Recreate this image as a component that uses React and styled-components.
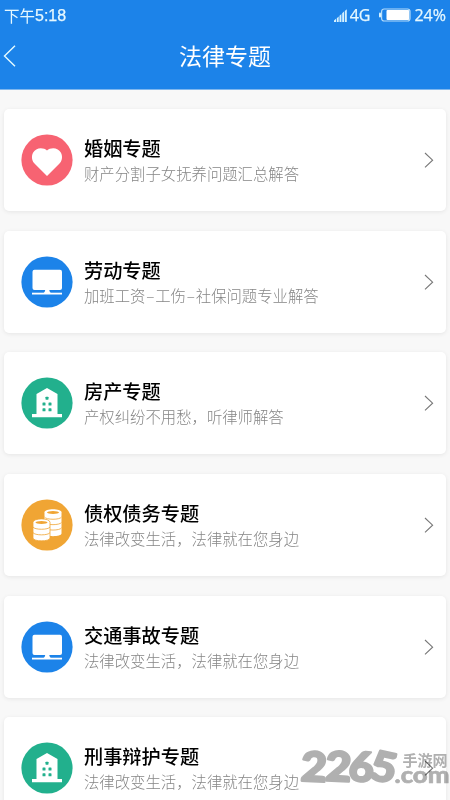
import React from 'react';
import styled, { createGlobalStyle } from 'styled-components';

const GlobalStyle = createGlobalStyle`
  body {
    margin: 0;
    background: #f8f8f8;
    font-family: "Noto Sans CJK SC", "Liberation Sans", sans-serif;
    overflow: hidden;
  }
`;

const Page = styled.div`
  position: relative;
  width: 450px;
  height: 800px;
  overflow: hidden;
  background: #f8f8f8;
`;

const Header = styled.header`
  height: 90px;
  background: #1c83e9;
  border-bottom: 1px solid #7fb7ee;
  box-sizing: border-box;
  color: #fff;
`;

const StatusBar = styled.div`
  display: flex;
  align-items: center;
  height: 30px;
  padding: 0 4px 0 4px;
  font-size: 15.5px;
  line-height: 29px;
  color: #e6f8ff;
`;

const Latin = styled.span`
  font-family: ${(props) => props.$font || '"Liberation Sans"'}, sans-serif;
  font-size: ${(props) => props.$size || 16}px;
  -webkit-text-stroke: 0.25px currentColor;
`;

const StatusRight = styled.div`
  display: flex;
  align-items: center;
  margin-left: auto;
`;

const SignalIcon = styled.svg`
  width: 13px;
  height: 13px;
  margin-right: 3px;
`;

const BatteryIcon = styled.svg`
  width: 32px;
  height: 14px;
  margin: 0 3px 0 9px;
`;

const TitleBar = styled.div`
  display: grid;
  grid-template-columns: 40px 1fr 40px;
  align-items: center;
  height: 52px;
`;

const BackIcon = styled.svg`
  width: 13px;
  height: 22px;
  margin-left: 3px;
`;

const PageTitle = styled.h1`
  margin: 0;
  font-size: 23px;
  font-weight: 400;
  line-height: 50px;
  height: 52px;
  text-align: center;
`;

const List = styled.ul`
  list-style: none;
  margin: 0;
  padding: 19px 4px 0;
  display: flex;
  flex-direction: column;
  gap: 19.7px;
`;

const Card = styled.li`
  display: flex;
  align-items: center;
  flex: none;
  height: 102px;
  box-sizing: border-box;
  padding: 0 12px 0 17px;
  background: #fff;
  border-radius: 5px;
  box-shadow: 0 1px 4px rgba(0, 0, 0, 0.08);
`;

const RoundIcon = styled.svg`
  width: 52px;
  height: 52px;
  flex: none;
`;

const Texts = styled.div`
  flex: 1;
  margin-left: 11px;
  white-space: nowrap;
`;

const CardTitle = styled.div`
  font-size: 19.2px;
  font-weight: 500;
  line-height: 26px;
  color: #000;
`;

const CardDesc = styled.div`
  font-size: 15.36px;
  font-weight: 300;
  line-height: 24px;
  color: #868686;
`;

const Dash = styled.span`
  display: inline-block;
  width: 9.8px;
  text-align: center;
`;

const Arrow = styled.svg`
  width: 10px;
  height: 16px;
  flex: none;
`;

const Watermark = styled.svg`
  position: absolute;
  left: 290px;
  top: 734px;
  width: 160px;
  height: 66px;
  overflow: visible;
  mix-blend-mode: multiply;
`;

const shapes = {
  heart: {
    color: '#f76372',
    art: (
      <path
        fill="#fff"
        d="M26 42 L13.5 29.5 C9.5 25.3 10.3 18 15.3 15.4 C19 13.4 23.6 14.3 26 16.6 C28.4 14.3 33 13.4 36.7 15.4 C41.7 18 42.5 25.3 38.5 29.5 Z"
      />
    ),
  },
  monitor: {
    color: '#1c83e9',
    art: (
      <g fill="#fff">
        <rect x="11.5" y="13.7" width="29.5" height="20.3" rx="2" />
        <path d="M24.2 33.5 H28.3 C28.3 35.5 29 36.6 30.5 37.2 H22 C23.5 36.6 24.2 35.5 24.2 33.5 Z" />
        <rect x="11" y="36.7" width="30" height="1.8" />
      </g>
    ),
  },
  building: {
    color: '#22b08d',
    art: (
      <>
        <path fill="#fff" d="M15.5 37 V17 L26 11 L36.5 17 V37 H41 V40.3 H11 V37 Z" />
        <g fill="#22b08d">
          <rect x="24.5" y="19.7" width="3" height="3" rx="0.6" />
          <rect x="21.5" y="25.5" width="3" height="3" rx="0.6" />
          <rect x="27.5" y="25.5" width="3" height="3" rx="0.6" />
          <rect x="21.5" y="31.3" width="3" height="3" rx="0.6" />
          <rect x="27.5" y="31.3" width="3" height="3" rx="0.6" />
        </g>
      </>
    ),
  },
  coins: {
    color: '#f0a534',
    art: (
      <>
        <path fill="#fff" d="M23.5 13.3 C23.5 9.3 40.5 9.3 40.5 13.3 V34.5 C40.5 38 23.5 38 23.5 34.5 Z" />
        <g fill="none" stroke="#f0a534" strokeWidth="0.8">
          <path d="M23.5 18 C25 21 39 21 40.5 18" />
          <path d="M23.5 23.4 C25 26.4 39 26.4 40.5 23.4" />
          <path d="M23.5 28.8 C25 31.8 39 31.8 40.5 28.8" />
        </g>
        <ellipse cx="32" cy="13.5" rx="6" ry="1.5" fill="#f0a534" />
        <path
          fill="#fff"
          stroke="#f0a534"
          strokeWidth="0.8"
          d="M12 23.3 C12 18.8 29 18.8 29 23.3 V39 C29 42.8 12 42.8 12 39 Z"
        />
        <g fill="none" stroke="#f0a534" strokeWidth="0.8">
          <path d="M12 28 C13.5 31 27.5 31 29 28" />
          <path d="M12 33.6 C13.5 36.6 27.5 36.6 29 33.6" />
        </g>
        <ellipse cx="20.5" cy="23.5" rx="6" ry="1.5" fill="#f0a534" />
      </>
    ),
  },
};

const topics = [
  { icon: 'heart', title: '婚姻专题', desc: '财产分割子女抚养问题汇总解答' },
  {
    icon: 'monitor',
    title: '劳动专题',
    desc: (
      <>
        加班工资<Dash>–</Dash>工伤<Dash>–</Dash>社保问题专业解答
      </>
    ),
  },
  { icon: 'building', title: '房产专题', desc: '产权纠纷不用愁，听律师解答' },
  { icon: 'coins', title: '债权债务专题', desc: '法律改变生活，法律就在您身边' },
  { icon: 'monitor', title: '交通事故专题', desc: '法律改变生活，法律就在您身边' },
  { icon: 'building', title: '刑事辩护专题', desc: '法律改变生活，法律就在您身边' },
];

const TopicCard = ({ icon, title, desc }) => (
  <Card>
    <RoundIcon viewBox="0 0 52 52">
      <circle cx="26" cy="26" r="25.6" fill={shapes[icon].color} />
      {shapes[icon].art}
    </RoundIcon>
    <Texts>
      <CardTitle>{title}</CardTitle>
      <CardDesc>{desc}</CardDesc>
    </Texts>
    <Arrow viewBox="0 0 10 16" fill="none" stroke="#777" strokeWidth="1.1">
      <path d="M1 1 L8.6 8.2 L1 15.3" />
    </Arrow>
  </Card>
);

const App = () => {
  return (
    <Page>
      <GlobalStyle />
      <Header>
        <StatusBar>
          <span>下午</span>
          <Latin $size={16}>5:18</Latin>
          <StatusRight>
            <SignalIcon viewBox="0 0 13 13" fill="#d6f2ff">
              <path d="M0 13 V11.4 L2 9.8 V13 Z" />
              <path d="M2.8 13 V9.2 L4.7 7.6 V13 Z" />
              <path d="M5.5 13 V6.8 L7.4 5 V13 Z" />
              <path d="M8.2 13 V4.3 L10 2.6 V13 Z" />
              <path d="M10.8 13 V1.9 L12.8 0.2 V13 Z" />
            </SignalIcon>
            <Latin $font='"Open Sans"' $size={16}>4G</Latin>
            <BatteryIcon viewBox="0 0 32 14">
              <rect x="0" y="4.5" width="2" height="5" rx="1" fill="#d6f2ff" />
              <rect x="2.6" y="1" width="28.4" height="12" rx="2.5" fill="none" stroke="#b5dcfa" strokeWidth="1.2" />
              <rect x="7.5" y="2" width="22.7" height="10" rx="1" fill="#fff" />
            </BatteryIcon>
            <Latin $font='"Open Sans"' $size={16}>24%</Latin>
          </StatusRight>
        </StatusBar>
        <TitleBar>
          <BackIcon viewBox="0 0 13 22" fill="none" stroke="#e6fbff" strokeWidth="1.4">
            <path d="M12 0.8 L1.5 11 L12 21.2" />
          </BackIcon>
          <PageTitle>法律专题</PageTitle>
        </TitleBar>
      </Header>
      <List>
        {topics.map((topic) => (
          <TopicCard key={topic.title} {...topic} />
        ))}
      </List>
      <Watermark viewBox="0 0 160 66" fill="#b0b0b0" stroke="#b0b0b0" strokeLinejoin="round">
        <g fontFamily="Lato, sans-serif" fontWeight="900" fontSize="41" strokeWidth="2.2">
          <text x="11" y="47.3" transform="rotate(3 23 34)" textLength="26" lengthAdjust="spacingAndGlyphs">2</text>
          <text x="35.5" y="47.3" transform="rotate(3 48 34)" textLength="26" lengthAdjust="spacingAndGlyphs">2</text>
          <text x="59" y="47.3" transform="rotate(4 71 34)" textLength="25" lengthAdjust="spacingAndGlyphs">6</text>
          <text x="80.5" y="47.3" transform="rotate(12 93 34)" textLength="26" lengthAdjust="spacingAndGlyphs">5</text>
        </g>
        <text
          x="104.5"
          y="48.5"
          fontFamily="Lato, sans-serif"
          fontWeight="900"
          fontSize="23"
          strokeWidth="0.6"
          textLength="55"
          lengthAdjust="spacingAndGlyphs"
        >
          .com
        </text>
        <text x="112.5" y="32" fontFamily='"Noto Sans CJK SC", sans-serif' fontWeight="700" fontSize="15" stroke="none">
          手游网
        </text>
      </Watermark>
    </Page>
  );
};

export default App;
